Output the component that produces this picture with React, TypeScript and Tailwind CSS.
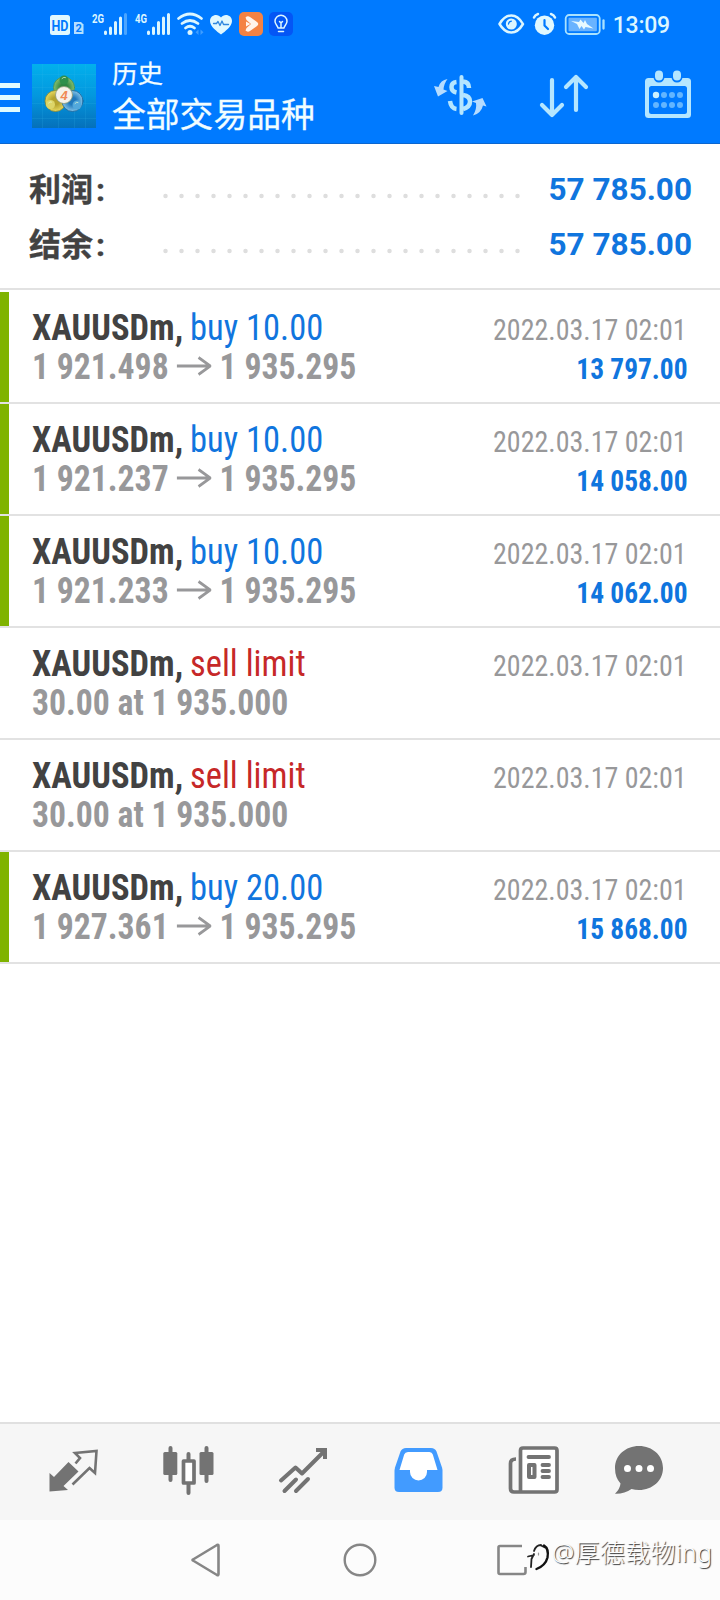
import type { ReactNode } from "react";

type Deal = {
   symbol: string;
   action: string;
   side: "buy" | "sell";
   open: string;
   close?: string;
   time: string;
   profit?: string;
}

const deals: Deal[] = [
   { symbol: "XAUUSDm,", action: "buy 10.00", side: "buy", open: "1 921.498", close: "1 935.295", time: "2022.03.17 02:01", profit: "13 797.00" },
   { symbol: "XAUUSDm,", action: "buy 10.00", side: "buy", open: "1 921.237", close: "1 935.295", time: "2022.03.17 02:01", profit: "14 058.00" },
   { symbol: "XAUUSDm,", action: "buy 10.00", side: "buy", open: "1 921.233", close: "1 935.295", time: "2022.03.17 02:01", profit: "14 062.00" },
   { symbol: "XAUUSDm,", action: "sell limit", side: "sell", open: "30.00 at 1 935.000", time: "2022.03.17 02:01" },
   { symbol: "XAUUSDm,", action: "sell limit", side: "sell", open: "30.00 at 1 935.000", time: "2022.03.17 02:01" },
   { symbol: "XAUUSDm,", action: "buy 20.00", side: "buy", open: "1 927.361", close: "1 935.295", time: "2022.03.17 02:01", profit: "15 868.00" },
]

const Icon = ({ box, className, children }: { box: string; className: string; children: ReactNode }) => (
   <svg viewBox={box} className={`shrink-0 ${className}`} fill="none" strokeLinecap="round" strokeLinejoin="round">
      {children}
   </svg>
)

const StatusBar = () => {
   return (
      <div className="flex h-12 items-center justify-between pl-12 pr-[50px]">
         <Icon box="48 0 248 48" className="h-12 w-[248px]">
            <rect x="50" y="15" width="20" height="20" rx="2.5" fill="#e0f8ff" />
            <text x="60" y="30.5" textAnchor="middle" fontSize="14.5" fontWeight="700" textLength="17" lengthAdjust="spacingAndGlyphs" fontFamily="Roboto, sans-serif" fill="#007aff">HD</text>
            <path d="M76 22h5l2.5 2.5V34H74V22z" fill="#b5dfff" />
            <text x="78.7" y="32" textAnchor="middle" fontSize="11" fontWeight="700" fontFamily="Roboto, sans-serif" fill="#007aff">2</text>
            <text x="92" y="22.5" fontSize="13" fontWeight="700" textLength="12" lengthAdjust="spacingAndGlyphs" fontFamily="Roboto, sans-serif" fill="#dcf6ff">2G</text>
            <path d="M105.500 32v1.500M110.500 28v5.500M115.500 22.500v11M120.500 18v15.500" stroke="#dcf6ff" strokeWidth="3" />
            <path d="M125.500 14.500v19" stroke="#4ba5ff" strokeWidth="3" />
            <text x="135" y="22.500" fontSize="13" fontWeight="700" textLength="12" lengthAdjust="spacingAndGlyphs" fontFamily="Roboto, sans-serif" fill="#dcf6ff">4G</text>
            <path d="M148.500 32v1.500M153.500 28v5.500M158.500 22.500v11M163.500 18v15.500M168.500 14.500v19" stroke="#dcf6ff" strokeWidth="3" />
            <path d="M178.500 18.500q11.500-9 23 0M182 23.500q8-6 16 0M185.500 28q4.500-3.500 9 0" stroke="#dcf6ff" strokeWidth="2.800" />
            <circle cx="190" cy="32.500" r="2.500" fill="#dcf6ff" />
            <path d="M198.500 29.500v5.500l-3-2.750zM200.500 29.500v5.500l3-2.750z" fill="#3f9dff" />
            <path d="M221 34.500c-4-3-11-8-11-13.500 0-6.500 8-8 11-3.500 3-4.500 11-3 11 3.500 0 5.500-7 10.500-11 13.500z" fill="#e0f8ff" />
            <path d="M213.500 23.500h3l1.500-2 2 4 2-4.500 1.500 3.500h5" stroke="#2f86dd" strokeWidth="1.300" />
            <rect x="239" y="12" width="24" height="24" rx="5" fill="#f48243" />
            <path d="M245.500 17.500q2-2 4.500-.5l7 5q2.500 2 0 4l-7 5q-2.500 1.500-4.500-.5l1-2.500 4.500-4-4.500-4z" fill="#fff4ec" />
            <path d="M246 21.500l4.500 2.500-4.500 2.500z" fill="#fff4ec" />
            <rect x="269" y="12" width="24" height="24" rx="5" fill="#0456f5" />
            <path d="M278 28c0-2-3-3.500-3-6.800a6 6 0 0 1 12 0c0 3.300-3 4.800-3 6.800zM278.500 31.500h5M281 27.500v-5M279.500 21.500l1.500 1.500 1.500-1.500" stroke="#dcf6ff" strokeWidth="1.500" />
         </Icon>
         <div className="flex items-center">
            <Icon box="498 0 110 48" className="h-12 w-[110px]">
               <path d="M499.500 24q5-8.500 11.800-8.500T523 24q-5 8.500-11.700 8.500T499.500 24z" stroke="#dcf6ff" strokeWidth="2.500" />
               <circle cx="511.300" cy="24" r="5.500" fill="#dcf6ff" />
               <path d="M508.500 24q.3-2.500 2.800-2.800" stroke="#007aff" strokeWidth="1.300" />
               <circle cx="544.500" cy="25.200" r="9.700" fill="#e0f8ff" />
               <path d="M534 17.500q1-2.500 4-3.500M551 14q3 1 4 3.500" stroke="#dcf6ff" strokeWidth="2.500" />
               <path d="M544.500 20v5.500l3.500 3.500" stroke="#007aff" strokeWidth="2.200" />
               <rect x="565.700" y="15" width="34" height="19" rx="3.500" stroke="#a9e2ff" strokeWidth="1.800" />
               <rect x="568.500" y="17.700" width="28.400" height="13.600" rx="1" fill="#69b3ff" />
               <path d="M571 21l8 1 1.500-2.500 3 3.500 1.500-3 2 4 6.500 4.500-8-1.500-1.500 2.500-2.500-3.500-2 3-2.500-5z" fill="#e8faff" />
               <path d="M603.500 20.500v8" stroke="#a9e2ff" strokeWidth="2.300" />
            </Icon>
            <span className="mt-[3px] ml-[5px] font-[Roboto] text-[23px] leading-[45px] font-medium tracking-[-0.2px] text-[#dcf6ff]">13:09</span>
         </div>
      </div>
   )
}

const Logo = () => (
   <Icon box="0 0 64 64" className="h-16 w-16">
      <defs>
         <linearGradient id="sky" x1="0" y1="0" x2="0" y2="1">
            <stop offset="0" stopColor="#02b0ec" />
            <stop offset="0.5" stopColor="#0397de" />
            <stop offset="1" stopColor="#0570ba" />
         </linearGradient>
         <radialGradient id="green" cx="0.5" cy="0.5" r="0.6">
            <stop offset="0.3" stopColor="#2f8544" />
            <stop offset="1" stopColor="#a3d27c" />
         </radialGradient>
         <radialGradient id="gold" cx="0.5" cy="0.5" r="0.6">
            <stop offset="0.3" stopColor="#b5a32e" />
            <stop offset="1" stopColor="#f7ea70" />
         </radialGradient>
         <radialGradient id="blue" cx="0.5" cy="0.5" r="0.6">
            <stop offset="0.3" stopColor="#2078bc" />
            <stop offset="1" stopColor="#a3dbf5" />
         </radialGradient>
      </defs>
      <path d="M0 0h64v64H0z" fill="url(#sky)" />
      <path d="M10.500 0v64M26.500 0v64M42.500 0v64M53.500 0v64M0 10.500h64M0 23.500h64M0 39.500h64M0 54.500h64" stroke="#35b8ea" strokeOpacity="0.160" />
      <circle cx="32" cy="23.500" r="10.500" fill="url(#green)" stroke="#4c8f4a" strokeWidth="0.800" />
      <circle cx="23.500" cy="37" r="10.500" fill="url(#gold)" stroke="#8a8530" strokeWidth="0.800" />
      <circle cx="40.500" cy="37" r="10.500" fill="url(#blue)" stroke="#1b5f94" strokeWidth="0.800" />
      <circle cx="32" cy="16" r="4.500" fill="#2e8f4c" />
      <circle cx="18.500" cy="40.500" r="4.500" fill="#ddd568" />
      <circle cx="45" cy="41" r="4.500" fill="#52a8dc" />
      <path d="M30 14.500q2-2 3.500-1M16.500 39q1.500-2 3-1M43 39.500q1.500-2 3-1" stroke="#e7fbd0" strokeOpacity="0.700" />
      <circle cx="32" cy="31" r="8.500" fill="#f5f2ea" stroke="#8d9a78" strokeWidth="0.800" />
      <text x="32" y="35.800" textAnchor="middle" fontSize="13" fontWeight="700" fontStyle="italic" fontFamily="Liberation Sans, sans-serif" fill="#f08a55">4</text>
   </Icon>
)

const Toolbar = () => {
   return (
      <div className="flex h-24 items-start border-b border-[#0b66cf]">
         <div className="mt-[35px] flex w-5 flex-col gap-[7px]">
            <div className="h-[5px] bg-[#e0fbff]"></div>
            <div className="h-[5px] bg-[#e0fbff]"></div>
            <div className="h-[5px] bg-[#e0fbff]"></div>
         </div>
         <div className="mt-4 ml-3">
            <Logo />
         </div>
         <div className="ml-4 grow font-[Roboto,'Noto_Sans_CJK_SC',sans-serif] text-[#f2fdff] [-webkit-text-stroke:0.3px_#f2fdff]">
            <div className="mt-[9px] text-[25.500px] leading-[34px]">历史</div>
            <div className="mt-[3px] text-[33.800px] leading-[44px]">全部交易品种</div>
         </div>
         <Icon box="432 70 56 50" className="mt-[22px] h-[50px] w-14">
            <g stroke="#b5e6ff" strokeWidth="4.500" strokeLinecap="butt">
               <path d="M456.500 82q-5 .5-5 5t5 5.500M463 81.500q6 .5 6 6.500M450 101q1 7.500 6.500 8M463 95q7 1 7 6.500t-7 7.500" />
               <path d="M461.500 77v36" strokeWidth="4" strokeLinecap="round" />
            </g>
            <path d="M447.500 79q-7 1-9 8l-4.500-1 4 10.500 9.500-5.500-4-1.500q.5-6 4-10.500zM473 115.500q8-2 10-10l3.500 1-4-8.500-10.500 3.500 4 1.500q1 6-3 12.500z" fill="#b5dcff" />
         </Icon>
         <Icon box="538 70 52 50" className="mt-[22px] ml-[50px] h-[50px] w-[52px]">
            <path d="M552 80v34M542 105l10 10 10-10M576 110V77M566 87l10-10 10 10" stroke="#b5e6ff" strokeWidth="4.200" />
         </Icon>
         <Icon box="642 68 52 54" className="mt-5 mr-[26px] ml-[52px] h-[54px] w-[52px]">
            <rect x="645" y="78" width="46" height="40" rx="3.500" fill="#b5e6ff" />
            <rect x="649" y="86" width="38" height="28" rx="2.500" fill="#007aff" />
            <path d="M659 73.500v3.500M677 73.500v3.500" stroke="#007aff" strokeWidth="11" />
            <path d="M659 74.500v2M677 74.500v2" stroke="#b5e6ff" strokeWidth="8" />
            <circle cx="656" cy="95" r="3.200" fill="#cdf2ff" />
            <path d="M664 95h0M672 95h0M680 95h0M656 105h0M664 105h0M672 105h0M680 105h0" stroke="#63b5ff" strokeWidth="6" />
         </Icon>
      </div>
   )
}

const SummaryRow = ({ label, value }: { label: string; value: string }) => (
   <div className="flex h-[55px] items-center">
      <div className="mt-[3px] w-[134px] font-[Roboto,'Noto_Sans_CJK_SC',sans-serif] text-[32px] leading-[55px] font-bold text-[#424242] [-webkit-text-stroke:0.4px_#424242]">
         {label}<span className="ml-[3px]">:</span>
      </div>
      <Icon box="0 0 360 6" className="mt-[14px] h-1.5 w-[360px]">
         <path d="M2.500 3h356" stroke="#dedede" strokeWidth="4.500" strokeDasharray="0 16" />
      </Icon>
      <div className="grow pt-px text-right font-[Roboto] text-[31.500px] leading-[55px] font-bold text-[#1075de]">{value}</div>
   </div>
)

const DealRow = ({ deal }: { deal: Deal }) => (
   <div className="flex h-28 border-b-2 border-[#e2e2e2] font-['Roboto_Condensed',Roboto,sans-serif]">
      <div className={`w-[9px] ${deal.profit ? "bg-[#7fb300]" : ""}`}></div>
      <div className="flex grow justify-between pt-4 pr-8 pl-[23px] whitespace-nowrap">
         <div className="text-[37px] leading-[39px]">
            <div className="origin-left scale-x-[0.932]">
               <span className="font-bold text-[#424242]">{deal.symbol}</span>{" "}
               <span className={`-ml-px ${deal.side === "buy" ? "text-[#1075de]" : "text-[#c62828]"}`}>{deal.action}</span>
            </div>
            <div className="flex origin-left scale-x-[0.91] items-center font-bold text-[#98989a]">
               {deal.open}
               {deal.close && (
                  <>
                     <Icon box="0 0 38 20" className="mx-[9px] -mt-0.5 h-5 w-[38px]">
                        <path d="M0 10h36M24 1.500L37 10l-13 8.500" stroke="#98989a" strokeWidth="3" strokeLinecap="butt" strokeLinejoin="miter" />
                     </Icon>
                     {deal.close}
                  </>
               )}
            </div>
         </div>
         <div className="pt-[3px] text-right text-[29px] leading-[39px]">
            <div className="mr-px origin-right scale-x-[0.965] text-[#98989a]">{deal.time}</div>
            <div className="origin-right scale-x-[0.945] font-bold text-[#1075de]">{deal.profit}</div>
         </div>
      </div>
   </div>
)

const TabBar = () => {
   return (
      <div className="flex h-[98px] border-t-2 border-[#e0e0e0] bg-[#f6f6f6] pt-5 pl-12">
         <Icon box="48 1444 52 52" className="h-[52px] w-[52px]">
            <path d="M49.500 1473l4.500 4 14.500-15 10 9.500-15 14.500 4.500 4-18.500 1.500z" fill="#737373" />
            <path d="M72.500 1484.500l17-16.500 5.500 5 1.500-22-21.500 2 5 5-4.500 5.500" stroke="#737373" strokeWidth="2.600" strokeLinecap="butt" strokeLinejoin="miter" />
         </Icon>
         <Icon box="162 1444 53 52" className="ml-[62px] h-[52px] w-[53px]">
            <path d="M170.500 1448v32M206.500 1448v33M188.500 1454v39" stroke="#737373" strokeWidth="4" />
            <rect x="163.300" y="1452" width="14" height="23" rx="1.500" fill="#737373" />
            <rect x="199.500" y="1452" width="14" height="23" rx="1.500" fill="#737373" />
            <rect x="183.500" y="1461" width="10.500" height="22" fill="#fff" stroke="#737373" strokeWidth="3.700" />
         </Icon>
         <Icon box="278 1444 50 52" className="ml-[63px] h-[52px] w-[50px]">
            <path d="M281 1480.500l14.500-13 6.500 6 23-23M284.500 1491l11.500-11.500M296 1491l12-12" stroke="#737373" strokeWidth="4" />
            <path d="M316 1450h9v9" stroke="#737373" strokeWidth="4" strokeLinecap="butt" strokeLinejoin="miter" />
         </Icon>
         <Icon box="393 1444 52 52" className="ml-[65px] h-[52px] w-[52px]">
            <path d="M406 1448h25q4 0 5.500 3.500l5.500 16q.5 2 .5 4v16q0 4.500-4.500 4.500h-39q-4.500 0-4.500-4.500v-16q0-2 .5-4l5.500-16q1.500-3.500 5.500-3.500z" fill="#429bff" />
            <path d="M408 1452h21.500q2.500 0 3.300 2.500l4.700 15.500h-10.500v2a8.500 8.500 0 0 1-17 0v-2h-10.500l4.700-15.500q.8-2.500 3.800-2.500z" fill="#fff" />
         </Icon>
         <Icon box="507 1444 53 52" className="ml-[62px] h-[52px] w-[53px]">
            <rect x="520.500" y="1448" width="36.500" height="44" rx="2.500" fill="#fff" />
            <path d="M521 1492h-7q-3.500 0-3.500-3.500v-25q0-4.500 5.500-4.500M520.500 1492v-41.500q0-2.500 2.500-2.500h31.500q2.500 0 2.500 2.500v39q0 2.500-2.500 2.500z" stroke="#737373" strokeWidth="3.700" strokeLinecap="butt" />
            <path d="M528.500 1457h20.500M542.500 1465h6.500M542.500 1471h6.500M542.500 1477h6.500" stroke="#737373" strokeWidth="3.800" />
            <rect x="529" y="1465" width="5.500" height="12" stroke="#737373" strokeWidth="4" />
         </Icon>
         <Icon box="614 1444 52 52" className="ml-[54px] h-[52px] w-[52px]">
            <path d="M639 1446c13.500 0 24 9.500 24 22s-10.500 22-24 22q-4 0-7.500-1-7 5-16.500 4.700 5-4.700 5.500-10.200-5.500-6-5.500-15.500c0-12.500 10.500-22 24-22z" fill="#737373" />
            <path d="M627.500 1468.500h0M639 1468.500h0M650.500 1468.500h0" stroke="#fff" strokeWidth="7" />
         </Icon>
      </div>
   )
}

const SystemNav = () => {
   return (
      <div className="flex h-20 items-start bg-[#fcfcfc]">
         <Icon box="188 1540 36 40" className="mt-5 ml-[188px] h-10 w-9">
            <path d="M193 1559.500l24-14.500q1.500-.7 1.500 1v28q0 1.700-1.500 1l-24-14.500q-1-.5 0-1z" stroke="#868686" strokeWidth="2.600" />
         </Icon>
         <Icon box="340 1540 40 40" className="mt-5 ml-[116px] h-10 w-10">
            <circle cx="360" cy="1560" r="15.300" stroke="#868686" strokeWidth="2.400" />
         </Icon>
         <Icon box="494 1536 58 44" className="mt-4 ml-[114px] h-11 w-[58px]">
            <path d="M522 1546h-22q-1.500 0-1.500 1.500v25q0 1.500 1.500 1.500h23.500q2 0 2-2v-5" stroke="#868686" strokeWidth="2.600" strokeLinecap="butt" />
            <path d="M528 1556.500l6-1.500M534 1554l-2.500 5-.5 8M534 1551q2-6 7-6M541 1545.500l4 2" stroke="#222" strokeWidth="1.800" />
            <path d="M544 1545.500q5 3 3.500 12-2 8-11 11.500" stroke="#111" strokeWidth="2.400" />
            <path d="M538.500 1553v2" stroke="#999" strokeWidth="1.200" />
         </Icon>
         <div className="mt-3 font-['Noto_Sans','Noto_Sans_CJK_SC',sans-serif] text-[25px] leading-[40px] font-light tracking-[0.300px] whitespace-nowrap text-[#fdfdfd] [text-shadow:1px_1px_1px_#333]">@厚德载物ing</div>
      </div>
   )
}

const App = () => {
   return (
      <div className="flex h-[1600px] w-[720px] flex-col overflow-hidden bg-white">
         <header className="bg-[#007aff]">
            <StatusBar />
            <Toolbar />
         </header>
         <section className="h-[146px] border-b-2 border-[#e2e2e2] pt-[17px] pr-7 pl-[29px]">
            <SummaryRow label="利润" value="57 785.00" />
            <SummaryRow label="结余" value="57 785.00" />
         </section>
         <main className="grow pt-0.5">
            {deals.map((deal, i) => (
               <DealRow key={i} deal={deal} />
            ))}
         </main>
         <TabBar />
         <SystemNav />
      </div>
   )
}

export default App
